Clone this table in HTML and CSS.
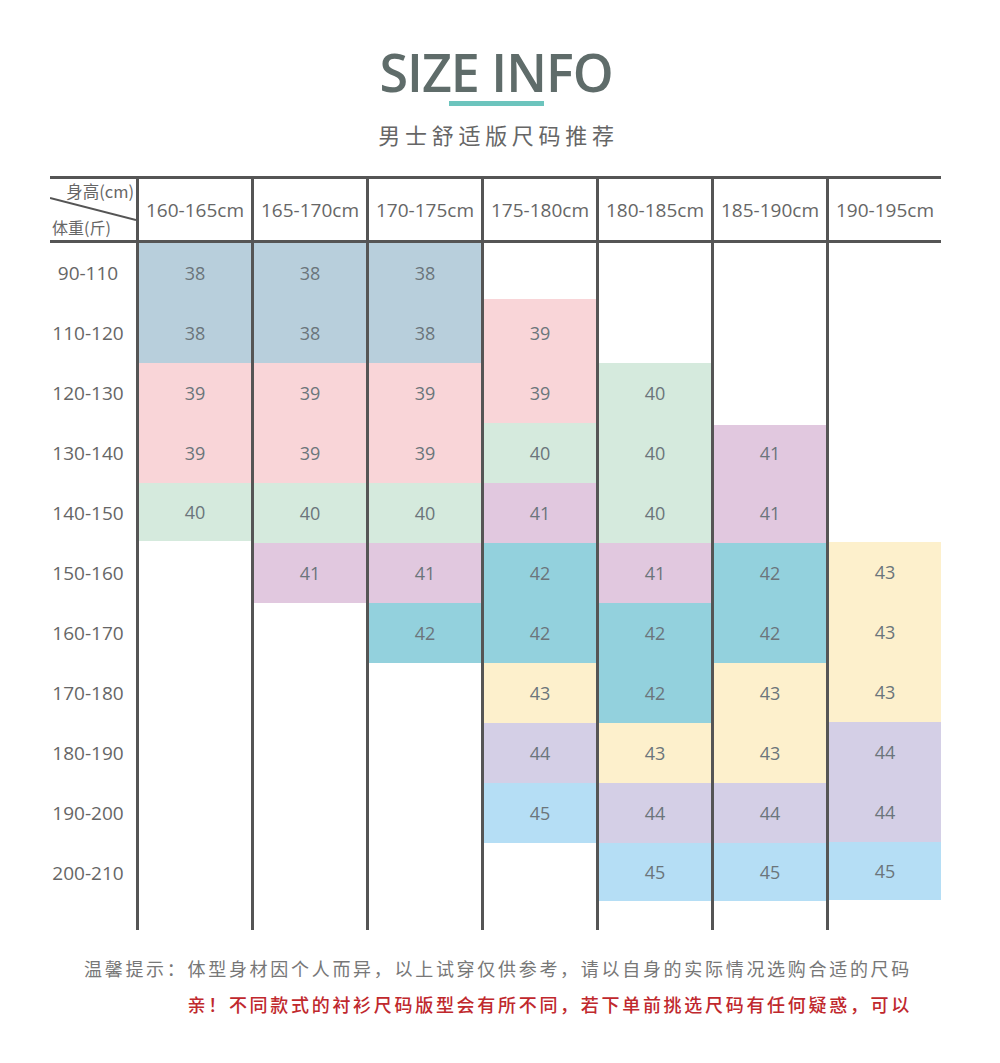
FILE: index.html
```html
<!DOCTYPE html>
<html lang="zh-CN">
<head>
<meta charset="utf-8">
<title>SIZE INFO</title>
<link rel="stylesheet" href="styles.css">
</head>
<body>
<div class="page">
  <header class="intro">
    <h1 class="title">SIZE INFO</h1>
    <div class="bar"></div>
    <p class="subtitle">男士舒适版尺码推荐</p>
  </header>

  <div class="chart">
    <div class="labels">
      <div class="corner">
        <svg class="diag" width="86" height="61" viewBox="0 0 86 61"><line x1="0" y1="19" x2="86" y2="41" stroke="#555" stroke-width="2"/></svg>
        <span class="corner-top">身高(cm)</span>
        <span class="corner-bottom">体重(斤)</span>
      </div>
      <div class="rows">
        <div class="lbl">90-110</div>
        <div class="lbl">110-120</div>
        <div class="lbl">120-130</div>
        <div class="lbl">130-140</div>
        <div class="lbl">140-150</div>
        <div class="lbl">150-160</div>
        <div class="lbl">160-170</div>
        <div class="lbl">170-180</div>
        <div class="lbl">180-190</div>
        <div class="lbl">190-200</div>
        <div class="lbl">200-210</div>
      </div>
    </div>

    <div class="col">
      <div class="head">160-165cm</div>
      <div class="body">
        <div class="c blue">38</div><div class="c blue">38</div>
        <div class="c pink">39</div><div class="c pink">39</div>
        <div class="c green h58">40</div>
      </div>
    </div>

    <div class="col">
      <div class="head">165-170cm</div>
      <div class="body">
        <div class="c blue">38</div><div class="c blue">38</div>
        <div class="c pink">39</div><div class="c pink">39</div>
        <div class="c green">40</div>
        <div class="c purple">41</div>
      </div>
    </div>

    <div class="col">
      <div class="head">170-175cm</div>
      <div class="body">
        <div class="c blue">38</div><div class="c blue">38</div>
        <div class="c pink">39</div><div class="c pink">39</div>
        <div class="c green">40</div>
        <div class="c purple">41</div>
        <div class="c teal">42</div>
      </div>
    </div>

    <div class="col">
      <div class="head">175-180cm</div>
      <div class="body">
        <div class="sp sp56"></div>
        <div class="c pink t64">39</div><div class="c pink">39</div>
        <div class="c green">40</div>
        <div class="c purple">41</div>
        <div class="c teal">42</div><div class="c teal">42</div>
        <div class="c yellow">43</div>
        <div class="c lav">44</div>
        <div class="c sky">45</div>
      </div>
    </div>

    <div class="col">
      <div class="head">180-185cm</div>
      <div class="body">
        <div class="sp sp120"></div>
        <div class="c green">40</div><div class="c green">40</div><div class="c green">40</div>
        <div class="c purple">41</div>
        <div class="c teal">42</div><div class="c teal">42</div>
        <div class="c yellow">43</div>
        <div class="c lav">44</div>
        <div class="c sky h58">45</div>
      </div>
    </div>

    <div class="col">
      <div class="head">185-190cm</div>
      <div class="body">
        <div class="sp sp182"></div>
        <div class="c purple s58">41</div><div class="c purple">41</div>
        <div class="c teal">42</div><div class="c teal">42</div>
        <div class="c yellow">43</div><div class="c yellow">43</div>
        <div class="c lav">44</div>
        <div class="c sky h58">45</div>
      </div>
    </div>

    <div class="col">
      <div class="head">190-195cm</div>
      <div class="body">
        <div class="sp sp299"></div>
        <div class="c yellow">43</div><div class="c yellow">43</div><div class="c yellow">43</div>
        <div class="c lav">44</div><div class="c lav">44</div>
        <div class="c sky h58">45</div>
      </div>
    </div>
  </div>

  <div class="notes">
    <p class="tip">温馨提示：体型身材因个人而异，以上试穿仅供参考，请以自身的实际情况选购合适的尺码</p>
    <p class="warn">亲！不同款式的衬衫尺码版型会有所不同，若下单前挑选尺码有任何疑惑，可以</p>
  </div>
</div>
</body>
</html>
```

FILE: styles.css
```css
* { box-sizing: border-box; }

html, body {
  margin: 0;
  padding: 0;
  background: #ffffff;
}

body {
  font-family: "Open Sans", "Noto Sans CJK SC", sans-serif;
  color: #666;
}

.page {
  width: 1000px;
  padding-top: 46px;
}

.intro {
  display: flex;
  flex-direction: column;
  align-items: center;
  padding-right: 8px;
}

.title {
  margin: 0;
  font-family: "Open Sans", sans-serif;
  font-weight: 600;
  font-size: 52px;
  line-height: 52px;
  letter-spacing: -1px;
  color: #5f6c6a;
}

.bar {
  width: 95px;
  height: 5px;
  margin-top: 3px;
  background: #6cc4bd;
}

.subtitle {
  margin: 13px 0 0;
  font-family: "Noto Sans CJK SC", sans-serif;
  font-size: 22px;
  line-height: 30px;
  letter-spacing: 4.7px;
  color: #666;
  padding-left: 5px;
}

.chart {
  display: flex;
  margin: 27px 0 0 50px;
  width: 892px;
}

.labels {
  width: 86px;
  display: flex;
  flex-direction: column;
}

.corner {
  position: relative;
  height: 67px;
  border-top: 3px solid #555;
  border-bottom: 3px solid #555;
  font-family: "Noto Sans CJK SC", sans-serif;
  color: #666;
}

.diag {
  position: absolute;
  left: 0;
  top: 0;
}

.corner-top {
  position: absolute;
  right: 2px;
  top: 1px;
  font-size: 16.5px;
  line-height: 22px;
}

.corner-bottom {
  position: absolute;
  left: 2px;
  top: 37px;
  font-size: 16px;
  line-height: 22px;
}

.rows {
  display: flex;
  flex-direction: column;
}

.lbl {
  height: 60px;
  display: flex;
  align-items: center;
  justify-content: center;
  padding-right: 10px;
  font-size: 19px;
  color: #666;
}

.col {
  width: 115px;
  border-left: 3px solid #555;
  display: flex;
  flex-direction: column;
}

.head {
  height: 67px;
  border-top: 3px solid #555;
  border-bottom: 3px solid #555;
  display: flex;
  align-items: center;
  justify-content: center;
  font-size: 19px;
  color: #666;
  white-space: nowrap;
}

.body {
  height: 687px;
  display: flex;
  flex-direction: column;
}

.c {
  height: 60px;
  display: flex;
  align-items: center;
  justify-content: center;
  font-size: 18px;
  color: #6b757b;
}

.c.t64 { height: 64px; padding-top: 4px; }
.c.h58 { height: 58px; }
.c.s58 { height: 58px; padding-bottom: 2px; }

.sp56 { height: 56px; }
.sp120 { height: 120px; }
.sp182 { height: 182px; }
.sp299 { height: 299px; }

.blue { background: #b8cfdc; }
.pink { background: #f9d5d8; }
.green { background: #d5eadd; }
.purple { background: #e1c8df; }
.teal { background: #93d1dd; }
.yellow { background: #fdf0cc; }
.lav { background: #d4cfe6; }
.sky { background: #b5def5; }

.notes {
  margin-top: 20px;
  padding-right: 88px;
  text-align: right;
  font-family: "Noto Sans CJK SC", sans-serif;
  font-size: 18px;
  line-height: 36px;
  letter-spacing: 2.7px;
}

.notes p {
  margin: 0;
}

.tip {
  color: #777;
}

.warn {
  color: #c0282d;
  font-weight: 500;
}
```
